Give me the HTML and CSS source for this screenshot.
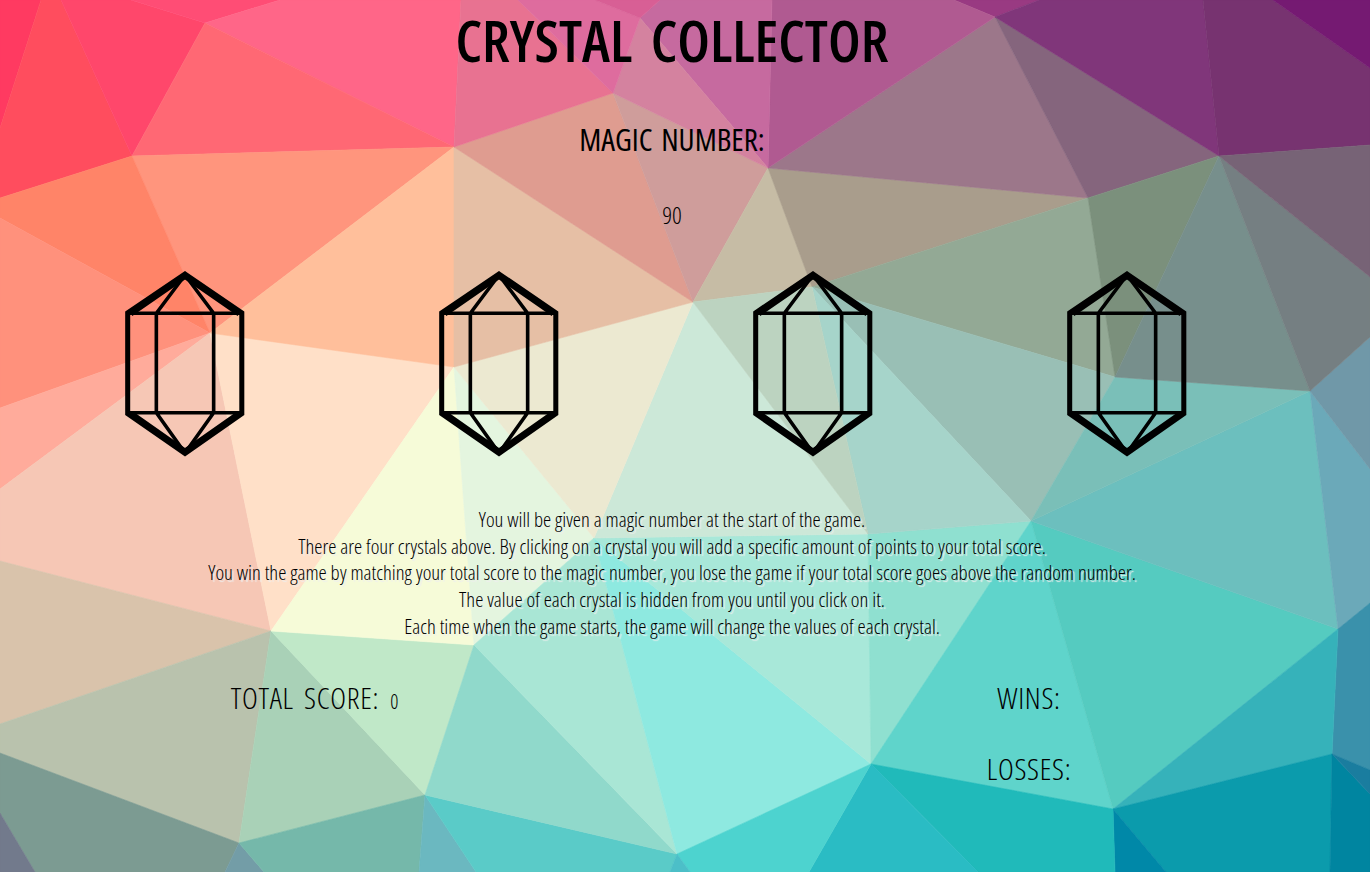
FILE: index.html
```html
<!DOCTYPE html>
<html lang="en">
<head>
<meta charset="utf-8">
<title>Crystal Collector</title>
<link rel="stylesheet" href="styles.css">
</head>
<body>
<svg class="backdrop" viewBox="0 0 1370 872" preserveAspectRatio="none" aria-hidden="true">
<g stroke-width="0.6" stroke-linejoin="round">
<polygon fill="#ff3a61" stroke="#ff3a61" points="0,0 41,0 0,128"/>
<polygon fill="#ff4d5e" stroke="#ff4d5e" points="41,0 61,0 132,156 0,198 0,128"/>
<polygon fill="#ff476b" stroke="#ff476b" points="61,0 131,0 205,23 132,156"/>
<polygon fill="#ff4d75" stroke="#ff4d75" points="131,0 280,0 205,23"/>
<polygon fill="#ff6688" stroke="#ff6688" points="280,0 461,0 454,147 205,23"/>
<polygon fill="#ff6874" stroke="#ff6874" points="205,23 454,147 132,156"/>
<polygon fill="#ff957d" stroke="#ff957d" points="132,156 454,147 210,333"/>
<polygon fill="#ff8468" stroke="#ff8468" points="0,198 132,156 210,333 0,218"/>
<polygon fill="#ff917c" stroke="#ff917c" points="0,218 210,333 0,408"/>
<polygon fill="#ffab9b" stroke="#ffab9b" points="0,408 210,333 0,489"/>
<polygon fill="#f6c7b5" stroke="#f6c7b5" points="0,489 210,333 271,631 0,561"/>
<polygon fill="#ffe0c8" stroke="#ffe0c8" points="210,333 454,367 271,631"/>
<polygon fill="#ffbf9b" stroke="#ffbf9b" points="210,333 454,147 454,367"/>
<polygon fill="#d9c3ab" stroke="#d9c3ab" points="0,561 271,631 0,724"/>
<polygon fill="#b9c2ad" stroke="#b9c2ad" points="0,724 271,631 239,843 0,753"/>
<polygon fill="#7c9b92" stroke="#7c9b92" points="0,753 239,843 225,872 35,872 0,813"/>
<polygon fill="#727a8c" stroke="#727a8c" points="0,813 35,872 0,872"/>
<polygon fill="#a9d1b7" stroke="#a9d1b7" points="271,631 425,795 239,843"/>
<polygon fill="#c0e8c8" stroke="#c0e8c8" points="271,631 474,645 425,795"/>
<polygon fill="#f6fbd8" stroke="#f6fbd8" points="271,631 454,367 474,645"/>
<polygon fill="#e4f5df" stroke="#e4f5df" points="454,367 594,538 474,645"/>
<polygon fill="#739da7" stroke="#739da7" points="239,843 264,872 225,872"/>
<polygon fill="#75b8aa" stroke="#75b8aa" points="239,843 425,795 419,872 264,872"/>
<polygon fill="#6bb8c0" stroke="#6bb8c0" points="425,795 476,872 419,872"/>
<polygon fill="#5acbc8" stroke="#5acbc8" points="425,795 677,854 670,872 476,872"/>
<polygon fill="#90d9cb" stroke="#90d9cb" points="425,795 474,645 677,854"/>
<polygon fill="#a9e6d5" stroke="#a9e6d5" points="474,645 594,538 677,854"/>
<polygon fill="#8ee9e0" stroke="#8ee9e0" points="594,538 871,764 677,854"/>
<polygon fill="#a8e8d9" stroke="#a8e8d9" points="594,538 868,534 871,764"/>
<polygon fill="#8fe0d0" stroke="#8fe0d0" points="868,534 1031,521 871,764"/>
<polygon fill="#5fd4cb" stroke="#5fd4cb" points="1031,521 1113,809 871,764"/>
<polygon fill="#55cbc0" stroke="#55cbc0" points="1031,521 1338,629 1113,809"/>
<polygon fill="#6cbfbe" stroke="#6cbfbe" points="1031,521 1310,391 1338,629"/>
<polygon fill="#6ba9b9" stroke="#6ba9b9" points="1310,391 1370,469 1370,603 1338,629"/>
<polygon fill="#7098a8" stroke="#7098a8" points="1310,391 1370,337 1370,469"/>
<polygon fill="#3a91ab" stroke="#3a91ab" points="1338,629 1370,603 1370,770 1332,754"/>
<polygon fill="#36b2ba" stroke="#36b2ba" points="1338,629 1332,754 1113,809"/>
<polygon fill="#0b9bac" stroke="#0b9bac" points="1113,809 1332,754 1330,872 1166,872"/>
<polygon fill="#0088a8" stroke="#0088a8" points="1113,809 1166,872 1115,872"/>
<polygon fill="#0085a0" stroke="#0085a0" points="1332,754 1370,794 1370,872 1330,872"/>
<polygon fill="#1a7d9f" stroke="#1a7d9f" points="1332,754 1370,770 1370,794"/>
<polygon fill="#20baba" stroke="#20baba" points="871,764 1113,809 1115,872 978,872"/>
<polygon fill="#2abcc4" stroke="#2abcc4" points="871,764 978,872 809,872"/>
<polygon fill="#4dd3cf" stroke="#4dd3cf" points="677,854 871,764 809,872 690,872"/>
<polygon fill="#4cbfc8" stroke="#4cbfc8" points="677,854 690,872 670,872"/>
<polygon fill="#cce8d8" stroke="#cce8d8" points="693,302 868,534 594,538"/>
<polygon fill="#ece9d1" stroke="#ece9d1" points="454,367 693,302 594,538"/>
<polygon fill="#e6bfa5" stroke="#e6bfa5" points="454,147 693,302 454,367"/>
<polygon fill="#df9c90" stroke="#df9c90" points="454,147 613,93 693,302"/>
<polygon fill="#cf9d9b" stroke="#cf9d9b" points="613,93 768,168 693,302"/>
<polygon fill="#c6bca5" stroke="#c6bca5" points="768,168 812,287 693,302"/>
<polygon fill="#a99d8c" stroke="#a99d8c" points="768,168 1088,198 812,287"/>
<polygon fill="#9c778a" stroke="#9c778a" points="768,168 995,17 1088,198"/>
<polygon fill="#85657d" stroke="#85657d" points="995,17 1219,156 1088,198"/>
<polygon fill="#993a82" stroke="#993a82" points="954,0 1039,0 995,17"/>
<polygon fill="#80367a" stroke="#80367a" points="1039,0 1203,0 1219,156 995,17"/>
<polygon fill="#773370" stroke="#773370" points="1203,0 1273,0 1370,68 1370,145 1219,156"/>
<polygon fill="#751a72" stroke="#751a72" points="1273,0 1370,0 1370,68"/>
<polygon fill="#b05a91" stroke="#b05a91" points="772,0 954,0 995,17 768,168"/>
<polygon fill="#c66a9f" stroke="#c66a9f" points="660,0 772,0 768,168 640,18"/>
<polygon fill="#d4829f" stroke="#d4829f" points="613,93 640,18 768,168"/>
<polygon fill="#e87291" stroke="#e87291" points="461,0 518,0 613,93 454,147"/>
<polygon fill="#de6c9e" stroke="#de6c9e" points="518,0 595,0 640,18 613,93"/>
<polygon fill="#d85f95" stroke="#d85f95" points="595,0 660,0 640,18"/>
<polygon fill="#93a995" stroke="#93a995" points="812,287 1088,198 1115,377"/>
<polygon fill="#7b907c" stroke="#7b907c" points="1088,198 1219,156 1115,377"/>
<polygon fill="#99bfb5" stroke="#99bfb5" points="812,287 1115,377 1031,521"/>
<polygon fill="#a6d4ca" stroke="#a6d4ca" points="812,287 1031,521 868,534"/>
<polygon fill="#bcd3c0" stroke="#bcd3c0" points="693,302 812,287 868,534"/>
<polygon fill="#7abfb8" stroke="#7abfb8" points="1115,377 1310,391 1031,521"/>
<polygon fill="#778f8c" stroke="#778f8c" points="1219,156 1310,391 1115,377"/>
<polygon fill="#757f82" stroke="#757f82" points="1219,156 1370,277 1370,337 1310,391"/>
<polygon fill="#776376" stroke="#776376" points="1219,156 1370,145 1370,277"/>
</g>
</svg>
<svg class="defs" aria-hidden="true">
<symbol id="gem" viewBox="0 0 119 185">
<path class="gem-outer" d="M59.5 3 116 41.5V142L59.5 181.5 2.5 142V41.5Z"/>
<path class="gem-slant" d="M6 43 59.5 6 113 43M6 141 59.5 178.5 113 141"/>
<path class="gem-inner" d="M4 42H115M4 141H115M31 42V141M88 42V141M59.5 4 31 42M59.5 4 88 42M59.5 181 31 141M59.5 181 88 141"/>
</symbol>
</svg>
<main class="game">
<h1 class="title">Crystal Collector</h1>
<h2 class="magic-label">Magic Number:</h2>
<p class="magic-value">90</p>
<section class="crystals">
<button class="crystal" type="button" aria-label="Crystal 1"><svg class="gem"><use href="#gem"/></svg></button>
<button class="crystal" type="button" aria-label="Crystal 2"><svg class="gem"><use href="#gem"/></svg></button>
<button class="crystal" type="button" aria-label="Crystal 3"><svg class="gem"><use href="#gem"/></svg></button>
<button class="crystal" type="button" aria-label="Crystal 4"><svg class="gem"><use href="#gem"/></svg></button>
</section>
<section class="rules">
<p>You will be given a magic number at the start of the game.</p>
<p>There are four crystals above. By clicking on a crystal you will add a specific amount of points to your total score.</p>
<p>You win the game by matching your total score to the magic number, you lose the game if your total score goes above the random number.</p>
<p>The value of each crystal is hidden from you until you click on it.</p>
<p>Each time when the game starts, the game will change the values of each crystal.</p>
</section>
<section class="scores">
<div class="total"><span class="score-label">Total Score:</span><span class="score-value">0</span></div>
<div class="tally">
<div class="score-label">Wins:</div>
<div class="score-label">Losses:</div>
</div>
</section>
</main>
</body>
</html>
```
FILE: styles.css
```css
* { box-sizing: border-box; }
html, body { margin: 0; height: 100%; }
body {
  position: relative;
  overflow: hidden;
  color: #000;
  font-family: "Open Sans", "Liberation Sans", sans-serif;
}
.backdrop { position: absolute; inset: 0; width: 100%; height: 100%; z-index: -1; display: block; }
.defs { position: absolute; width: 0; height: 0; }
.game { width: 1344px; padding-top: 5px; text-align: center; }
.title, .magic-label, .score-label {
  font-family: "Open Sans", "Liberation Sans Narrow", sans-serif;
  font-stretch: 75%;
  text-transform: uppercase;
}
.title {
  margin: 0;
  font-size: 57.5px;
  line-height: 70px;
  font-weight: 600;
  letter-spacing: 0;
  word-spacing: 8px;
}
.magic-label {
  margin: 43px 0 0;
  font-size: 31px;
  line-height: 42px;
  font-weight: 400;
  letter-spacing: 0;
  word-spacing: 3px;
}
.magic-value {
  margin: 40px 0 0;
  font-size: 24px;
  line-height: 30px;
  font-weight: 300;
  font-stretch: 75%;
}
.crystals { display: flex; margin: 41px 0 0 27.5px; width: 1257px; }
.crystal {
  flex: 1;
  display: flex;
  justify-content: center;
  padding: 0;
  border: 0;
  background: none;
}
.gem { width: 120px; height: 186px; display: block; }
.gem-outer { fill: none; stroke: #000; stroke-width: 5; stroke-linejoin: miter; }
.gem-slant { fill: none; stroke: #000; stroke-width: 4; }
.gem-inner { fill: none; stroke: #000; stroke-width: 3.6; }
.rules { margin-top: 49px; }
.rules p {
  margin: 0;
  font-size: 20.7px;
  line-height: 26.7px;
  font-weight: 300;
  font-stretch: 75%;
  text-shadow: 2px 2px 1px #eee;
}
.scores { display: flex; margin-top: 39px; }
.total { flex: none; width: 629px; display: flex; justify-content: center; align-items: baseline; gap: 11px; }
.score-label {
  font-size: 30px;
  line-height: 38px;
  font-weight: 300;
  letter-spacing: 0.7px;
  word-spacing: 4px;
}
.score-value { font-size: 20px; font-weight: 300; font-stretch: 75%; }
.tally { flex: none; width: 400px; margin-left: 200px; display: flex; flex-direction: column; gap: 33px; }
```
